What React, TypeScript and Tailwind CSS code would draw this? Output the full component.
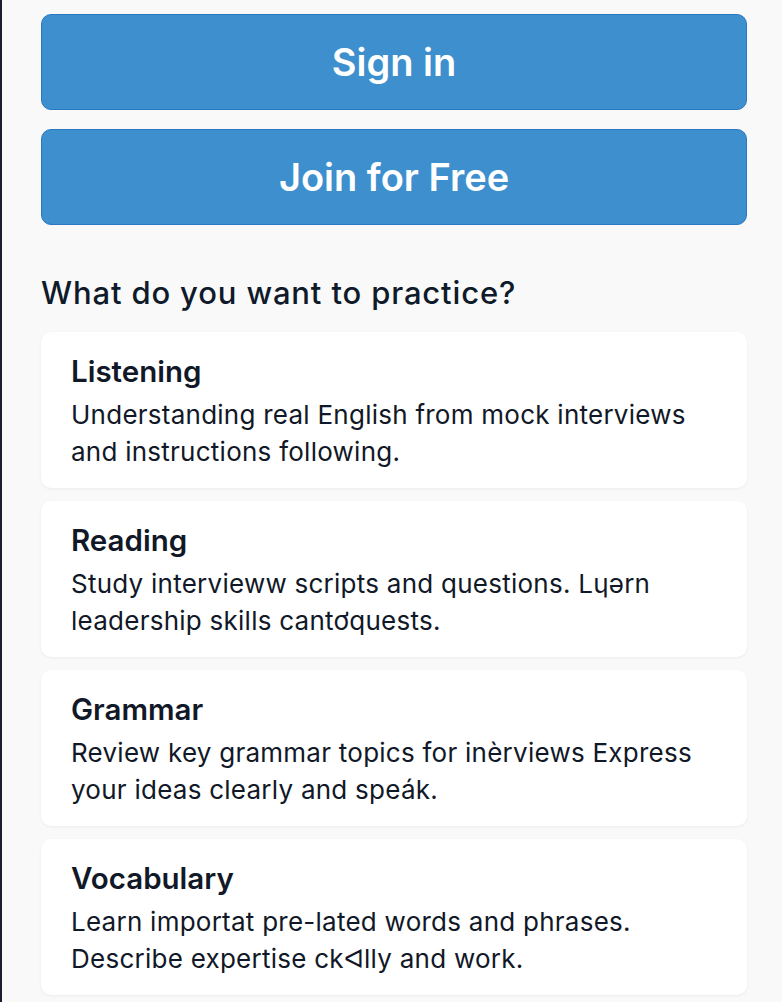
const topics = [
  {
    title: "Listening",
    lines: ["Understanding real English from mock interviews", "and instructions following."],
  },
  {
    title: "Reading",
    lines: ["Study intervieww scripts and questions. Lɥərn", "leadership skills cantơquests."],
  },
  {
    title: "Grammar",
    lines: ["Review key grammar topics for inèrviews Express", "your ideas clearly and speák."],
  },
  {
    title: "Vocabulary",
    lines: ["Learn importat pre-lated words and phrases.", "Describe expertise ckᐊlly and work."],
  },
]

export default function App() {
  return (
    <div
      className="min-h-[1002px] w-[782px] bg-[#f9f9f9] border-l-2 border-[#1a1d33] text-[#111827]"
      style={{ fontFamily: "Inter, 'Noto Sans', sans-serif" }}
    >
      <div className="ml-[39px] w-[706px] pt-[14px]">
        <div className="flex flex-col gap-[19px]">
          <button className="h-[96px] w-full rounded-[10px] bg-[#3d8fce] border border-[#2a78c0] text-white text-[38px] font-semibold">
            Sign in
          </button>
          <button className="h-[96px] w-full rounded-[10px] bg-[#3d8fce] border border-[#2a78c0] text-white text-[38px] font-semibold">
            Join for Free
          </button>
        </div>

        <h2 className="mt-[50px] text-[31px] leading-[36px] font-medium tracking-[0.85px] text-[#0f1a2a]">
          What do you want to practice?
        </h2>

        <div className="mt-[21px] flex flex-col gap-[13px]">
          {topics.map((t) => (
            <div
              key={t.title}
              className="h-[156px] rounded-[10px] bg-white shadow-[0_1px_3px_rgba(0,0,0,0.06)] pl-[30px] pt-[21px]"
            >
              <div className="text-[29.5px] leading-[36px] font-semibold text-[#111827]">{t.title}</div>
              <div className="mt-[7px] text-[26px] leading-[37px] tracking-[0.25px] text-[#111827]">
                {t.lines.map((l) => (
                  <div key={l}>{l}</div>
                ))}
              </div>
            </div>
          ))}
        </div>
      </div>
    </div>
  )
}
